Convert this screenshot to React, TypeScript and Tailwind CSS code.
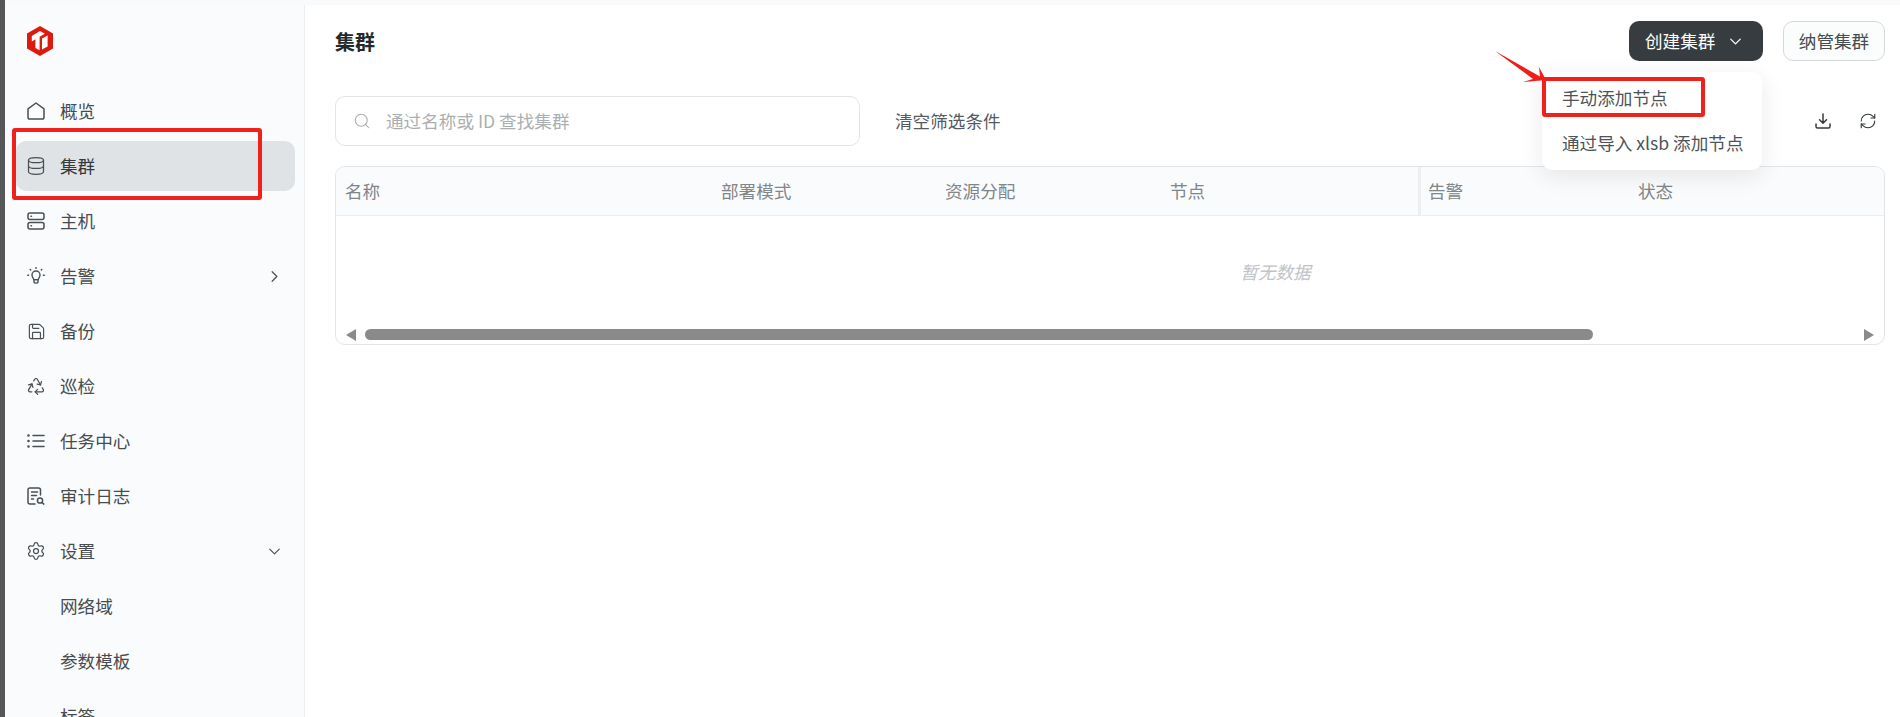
import React from "react";
import { ChevronDown, ChevronRight, Database, Recycle, RefreshCw, Save, Search, Settings } from "lucide-react";

const stroke = { fill: "none", stroke: "currentColor", strokeWidth: 1.5, strokeLinecap: "round" as const, strokeLinejoin: "round" as const };

function HomeIcon() {
  return (
    <svg width="18" height="18" viewBox="0 0 18 18" {...stroke}>
      <path d="M1 6.800 9 1l8 5.800v8.400a1.800 1.800 0 0 1-1.800 1.800H2.800A1.800 1.800 0 0 1 1 15.200z" />
    </svg>
  );
}
function HostIcon() {
  return (
    <svg width="18" height="18" viewBox="0 0 18 18" {...stroke}>
      <rect x="1" y="1" width="16" height="6.600" rx="2" />
      <rect x="1" y="10.400" width="16" height="6.600" rx="2" />
      <path d="M4 4.300h.5M4 13.700h.5" />
    </svg>
  );
}
function BulbIcon() {
  return (
    <svg width="18" height="18" viewBox="0 0 18 18" {...stroke} strokeWidth={1.4}>
      <path d="M6.700 12.600c0-1.500-1.700-2.300-1.700-4.600a4 4 0 0 1 8 0c0 2.300-1.700 3.100-1.700 4.600z" />
      <path d="M7 15.200c.4 1.200 3.600 1.200 4 0v-2.600H7z" />
      <path d="M9 .6v.8M3.200 2.600l.5.5M14.800 2.600l-.5.5M.7 8.200h.9M16.400 8.200h.9" />
    </svg>
  );
}
function ListIcon() {
  return (
    <svg width="18" height="18" viewBox="0 0 18 18" fill="none" stroke="currentColor" strokeLinecap="round">
      <path d="M1.500 3.500h.01M1.500 9h.01M1.500 14.500h.01" strokeWidth={2.600} />
      <path d="M6 3.500h11M6 9h11M6 14.500h11" strokeWidth={1.500} />
    </svg>
  );
}
function AuditIcon() {
  return (
    <svg width="18" height="18" viewBox="0 0 18 18" {...stroke}>
      <path d="M8 17H3a2 2 0 0 1-2-2V3a2 2 0 0 1 2-2h8.500a2 2 0 0 1 2 2v5" />
      <path d="M4.500 5h6M4.500 8.500h5M4.500 12h2" />
      <circle cx="13" cy="13.500" r="2.600" />
      <path d="m15 15.500 1.800 1.600" />
    </svg>
  );
}
function DownloadIcon() {
  return (
    <svg width="16" height="16" viewBox="0 0 16 16" {...stroke}>
      <path d="M8 1v9M4.500 6.800 8 10.300l3.500-3.500" />
      <path d="M1 11v2.500A1.500 1.500 0 0 0 2.500 15h11a1.500 1.500 0 0 0 1.500-1.500V11" />
    </svg>
  );
}
function Logo() {
  return (
    <svg width="26" height="30" viewBox="0 0 26 30">
      <path d="M13 0 26 7.500v15L13 30 0 22.500v-15z" fill="#dc1a0d" />
      <path d="M13 5 17.800 7.800 12.600 10.800V24.300L8.400 21.900V13.200L4.800 15.400V10z" fill="#fff" />
      <path d="M15 12.600 20.600 9.400V20.400L15 23.600z" fill="#fff" />
    </svg>
  );
}

const items = [
  { label: "概览", icon: <HomeIcon /> },
  { label: "集群", icon: <Database size={20} strokeWidth={1.5} className="-ml-[1px]" />, active: true },
  { label: "主机", icon: <HostIcon /> },
  { label: "告警", icon: <BulbIcon />, right: <ChevronRight size={19} strokeWidth={1.5} /> },
  { label: "备份", icon: <Save size={19} strokeWidth={1.5} /> },
  { label: "巡检", icon: <Recycle size={20} strokeWidth={1.5} className="-ml-[1px]" /> },
  { label: "任务中心", icon: <ListIcon /> },
  { label: "审计日志", icon: <AuditIcon /> },
  { label: "设置", icon: <Settings size={20} strokeWidth={1.5} className="-ml-[1px]" />, right: <ChevronDown size={19} strokeWidth={1.5} /> },
  { label: "网络域" },
  { label: "参数模板" },
  { label: "标签" },
];

const columns = [
  { label: "名称", w: "w-[376px]" },
  { label: "部署模式", w: "w-[224px]" },
  { label: "资源分配", w: "w-[225px]" },
  { label: "节点", w: "w-[257px]" },
  { label: "告警", w: "w-[211px]", shadow: true },
  { label: "状态", w: "flex-1" },
];

export default function App() {
  return (
    <div
      className="relative flex h-[717px] w-[1900px] overflow-hidden bg-white text-[17.6px] text-[#464c50]"
      style={{ fontFamily: '"Noto Sans CJK SC", "Noto Sans", sans-serif' }}
    >
      <div className="w-[5px] shrink-0 bg-[#545658]" />
      <div className="flex min-w-0 flex-1 flex-col">
        <div className="h-[5px] shrink-0 bg-[#f8fafb]" />
        <div className="flex min-h-0 flex-1">
          <aside className="flex w-[300px] shrink-0 flex-col border-r border-[#eceef1] bg-[#fafbfd] pl-[11px] pr-[9px]">
            <div className="flex h-[81px] shrink-0 items-center pb-[10px] pl-[11px]">
              <Logo />
            </div>
            <nav className="flex flex-col gap-[5px]">
              {items.map((it) => (
                <div
                  key={it.label}
                  className={`flex h-[50px] shrink-0 items-center rounded-[10px] pl-[11px] pr-[11px] ${it.active ? "bg-[#dfe3e6] text-[#33393d]" : ""}`}
                >
                  <span className="flex w-[33px] shrink-0 items-center text-[#4a5054]">{it.icon}</span>
                  <span className="flex-1 leading-none">{it.label}</span>
                  {it.right && <span className="text-[#4a5054]">{it.right}</span>}
                </div>
              ))}
            </nav>
          </aside>
          <main className="min-w-0 flex-1 bg-white pl-[30px] pr-[15px]">
            <header className="flex h-[72px] items-center justify-between">
              <h1 className="pt-[2px] text-[20px] font-semibold text-[#24292c]">集群</h1>
              <div className="flex gap-[20px]">
                <button className="flex h-[40px] w-[134px] items-center rounded-[10px] bg-[#363c3f] pl-[16px] text-[17.6px] text-white">
                  创建集群
                  <ChevronDown size={19} strokeWidth={1.6} className="ml-[11px]" />
                </button>
                <button className="h-[40px] w-[102px] rounded-[10px] border border-[#d6d9dc] bg-[#fbfcfc] text-[17.6px] text-[#464c50]">
                  纳管集群
                </button>
              </div>
            </header>
            <div className="mt-[19px] flex items-center">
              <div className="flex h-[50px] w-[525px] items-center rounded-[10px] border border-[#e2e5e8] bg-white pl-[17px]">
                <Search size={18} strokeWidth={1.4} className="text-[#a9adb0]" />
                <span className="ml-[15px] text-[#abafb2]">通过名称或 ID 查找集群</span>
              </div>
              <span className="ml-[35px] text-[#555b5f]">清空筛选条件</span>
              <div className="ml-auto flex items-center gap-[28px] pr-[8px] text-[#363c3f]">
                <DownloadIcon />
                <RefreshCw size={18} strokeWidth={1.5} />
              </div>
            </div>
            <div className="mt-[20px] h-[179px] overflow-hidden rounded-[10px] border border-[#e2e5e8]">
              <div className="flex h-[49px] border-b border-[#eceef0] bg-[#fafbfc] text-[#80868a]">
                {columns.map((c) => (
                  <div
                    key={c.label}
                    className={`flex items-center ${c.w} ${c.shadow ? "border-l-[3px] border-[#eceef0] pl-[7px]" : "pl-[9px]"}`}
                  >
                    {c.label}
                  </div>
                ))}
              </div>
              <div className="flex h-[113px] items-center justify-center pl-[331px] italic text-[#bfc3c6]">暂无数据</div>
              <div className="flex h-[15px] items-start gap-[9px] pl-[10px] pr-[10px]">
                <div className="h-0 w-0 border-y-[6px] border-r-[10px] border-y-transparent border-r-[#8a8a8a]" />
                <div className="h-[11px] w-[1228px] rounded-full bg-[#8a8a8a]" />
                <div className="ml-auto h-0 w-0 border-y-[6px] border-l-[10px] border-y-transparent border-l-[#8a8a8a]" />
              </div>
            </div>
          </main>
        </div>
      </div>

      <div className="absolute left-[1542px] top-[72px] h-[98px] w-[220px] rounded-[10px] bg-white pl-[20px] text-[#4d5357] shadow-[0_6px_24px_rgba(0,0,0,0.09)]">
        <div className="flex h-[49px] items-center pt-[4px]">手动添加节点</div>
        <div className="flex h-[45px] items-center">通过导入 xlsb 添加节点</div>
      </div>

      <div className="absolute left-[12px] top-[128px] h-[72px] w-[250px] rounded-[3px] border-[4px] border-[#f0211b]" />
      <div className="absolute left-[1542px] top-[77px] h-[40px] w-[163px] rounded-[3px] border-[4px] border-[#f0211b]" />
      <svg className="absolute left-[1490px] top-[46px]" width="62" height="42" viewBox="0 0 62 42">
        <path d="M5 5 50 30.500 49 21 56 34 33 36 43 33z" fill="#ee1f18" />
      </svg>
    </div>
  );
}
